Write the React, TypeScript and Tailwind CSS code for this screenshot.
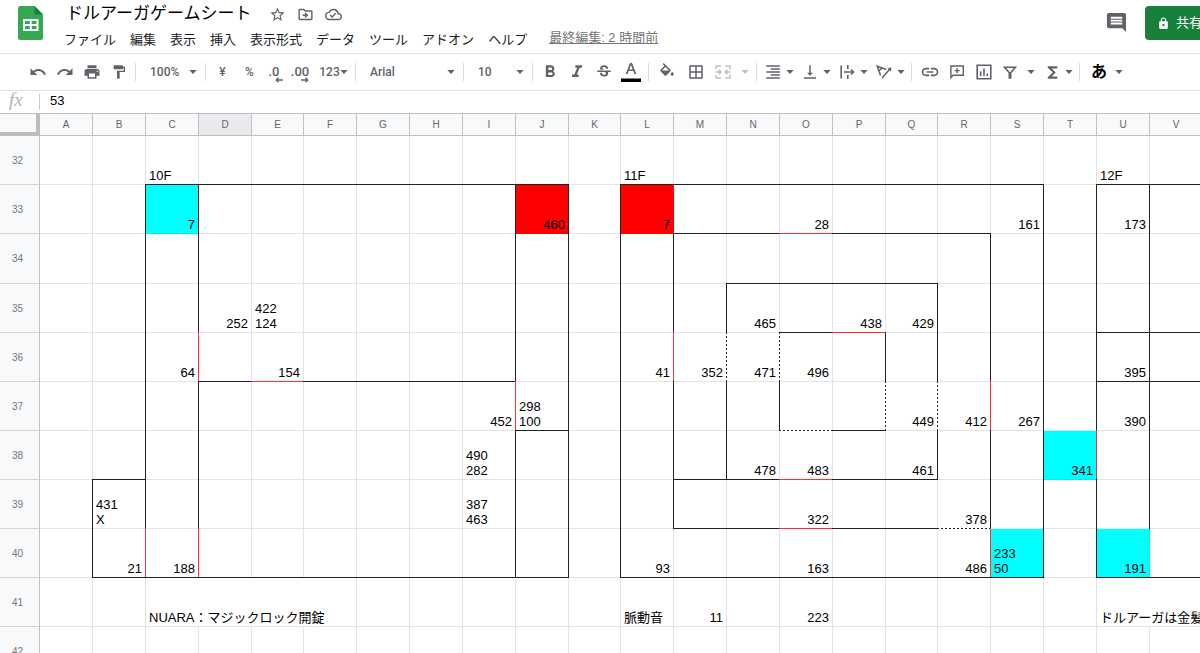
import React, { useState } from 'react';
import {
  MdBorderAll,
  MdComment,
  MdFormatAlignRight,
  MdFormatBold,
  MdFormatItalic,
  MdFormatPaint,
  MdLock,
  MdOutlineCloudDone,
  MdOutlineDriveFileMove,
  MdPrint,
  MdRedo,
  MdStarBorder,
  MdStrikethroughS,
  MdUndo,
  MdVerticalAlignBottom,
  MdInsertLink,
  MdFunctions,
} from 'react-icons/md';

type Line = 'black' | 'red' | 'dotted';
type Wall = [cols: string, rows: string, line: Line];

interface CellData {
  text: string;
  left?: boolean;
  span?: number;
}

const COLUMNS = 'ABCDEFGHIJKLMNOPQRSTUV'.split('');
const ROWS = [32, 33, 34, 35, 36, 37, 38, 39, 40, 41, 42];
const NARROW = 'EKQ';
const MENUS = ['ファイル', '編集', '表示', '挿入', '表示形式', 'データ', 'ツール', 'アドオン', 'ヘルプ'];

// later entries win over earlier ones
const RIGHT_WALLS: Wall[] = [
  ['A', '39-40', 'black'],
  ['B', '33-39', 'black'],
  ['B', '40-40', 'red'],
  ['C', '33-39', 'black'],
  ['C', '36-36', 'red'],
  ['C', '40-40', 'red'],
  ['I', '33-40', 'black'],
  ['I', '37-37', 'red'],
  ['JK', '33-40', 'black'],
  ['L', '34-39', 'black'],
  ['L', '36-36', 'red'],
  ['M', '35-38', 'black'],
  ['MN', '36-36', 'dotted'],
  ['N', '37-37', 'black'],
  ['P', '36-36', 'black'],
  ['Q', '35-38', 'black'],
  ['PQ', '37-37', 'dotted'],
  ['R', '34-39', 'black'],
  ['R', '37-37', 'red'],
  ['R', '40-40', 'red'],
  ['ST', '33-40', 'black'],
  ['T', '38-38', 'red'],
  ['U', '33-39', 'black'],
];

const BOTTOM_WALLS: Wall[] = [
  ['CDEFGHIJLMNOPQRSUV', '32-32', 'black'],
  ['MNOPQR', '33-33', 'black'],
  ['O', '33-33', 'red'],
  ['NOPQ', '34-34', 'black'],
  ['OUV', '35-35', 'black'],
  ['P', '35-35', 'red'],
  ['DFGHIUV', '36-36', 'black'],
  ['E', '36-36', 'red'],
  ['JP', '37-37', 'black'],
  ['O', '37-37', 'dotted'],
  ['BMNPQ', '38-38', 'black'],
  ['MNPQ', '39-39', 'black'],
  ['O', '38-39', 'red'],
  ['R', '39-39', 'dotted'],
  ['BCDEFGHIJLMNOPQRSUV', '40-40', 'black'],
];

const FILLS: Record<string, 'cyan' | 'red'> = {
  C33: 'cyan',
  J33: 'red',
  L33: 'red',
  T38: 'cyan',
  S40: 'cyan',
  U40: 'cyan',
};

const CELLS: Record<string, CellData> = {
  C32: { text: '10F', left: true },
  L32: { text: '11F', left: true },
  U32: { text: '12F', left: true },
  C33: { text: '7' },
  J33: { text: '460' },
  L33: { text: '7' },
  O33: { text: '28' },
  S33: { text: '161' },
  U33: { text: '173' },
  D35: { text: '252' },
  E35: { text: '422\n124', left: true },
  N35: { text: '465' },
  P35: { text: '438' },
  Q35: { text: '429' },
  C36: { text: '64' },
  E36: { text: '154' },
  L36: { text: '41' },
  M36: { text: '352' },
  N36: { text: '471' },
  O36: { text: '496' },
  U36: { text: '395' },
  I37: { text: '452' },
  J37: { text: '298\n100', left: true },
  Q37: { text: '449' },
  R37: { text: '412' },
  S37: { text: '267' },
  U37: { text: '390' },
  I38: { text: '490\n282', left: true },
  N38: { text: '478' },
  O38: { text: '483' },
  Q38: { text: '461' },
  T38: { text: '341' },
  B39: { text: '431\nX', left: true },
  I39: { text: '387\n463', left: true },
  O39: { text: '322' },
  R39: { text: '378' },
  B40: { text: '21' },
  C40: { text: '188' },
  L40: { text: '93' },
  O40: { text: '163' },
  R40: { text: '486' },
  S40: { text: '233\n50', left: true },
  U40: { text: '191' },
  C41: { text: 'NUARA：マジックロック開錠', left: true, span: 4 },
  L41: { text: '脈動音', left: true },
  M41: { text: '11' },
  O41: { text: '223' },
  U41: { text: 'ドルアーガは金髪', left: true, span: 2 },
};

const FILL_CLASS = {
  cyan: 'bg-[#00ffff] border-[#00f0f0]',
  red: 'bg-[#ff0000] border-[#ff0000]',
  none: 'border-[#e2e3e3]',
};

const RIGHT_LINE = {
  black: 'bg-[#222]',
  red: 'bg-[#ff3030]',
  dotted: 'bg-[repeating-linear-gradient(to_bottom,#222_0_2px,#fff_2px_4px)]',
};

const BOTTOM_LINE = {
  black: 'bg-[#222]',
  red: 'bg-[#ff3030]',
  dotted: 'bg-[repeating-linear-gradient(to_right,#222_0_2px,#fff_2px_4px)]',
};

const findWall = (walls: Wall[], col: string, row: number): Line | undefined => {
  let found: Line | undefined;
  walls.forEach(([cols, rows, line]) => {
    const [from, to] = rows.split('-').map(Number);
    if (cols.includes(col) && row >= from && row <= to) found = line;
  });
  return found;
};

const Caret: React.FC = () => (
  <svg viewBox="0 0 8 4" className="w-2 h-1 shrink-0 fill-current" aria-hidden="true">
    <path d="M0.3 0h7.4L4 4z" />
  </svg>
);

const Divider: React.FC = () => <div className="w-px h-[18px] mx-[3px] shrink-0 bg-[#dadce0]" />;

interface ToolProps {
  label: string;
  width?: string;
  className?: string;
  children: React.ReactNode;
}

const Tool: React.FC<ToolProps> = ({ label, width = 'w-[27px]', className = '', children }) => (
  <button
    type="button"
    aria-label={label}
    title={label}
    className={`${width} h-7 shrink-0 flex items-center justify-center rounded hover:bg-gray-100 ${className}`}
  >
    {children}
  </button>
);

const MenuTool: React.FC<{ label: string; children: React.ReactNode }> = ({ label, children }) => (
  <button
    type="button"
    aria-label={label}
    title={label}
    className="w-[37px] h-7 pr-[3px] shrink-0 flex items-center rounded hover:bg-gray-100"
  >
    <span className="flex-1 flex justify-center">{children}</span>
    <Caret />
  </button>
);

interface PickerProps {
  label: string;
  width: string;
  options: string[];
}

const Picker: React.FC<PickerProps> = ({ label, width, options }) => {
  const [value, setValue] = useState(options[0]);

  return (
    <div className={`${width} relative shrink-0 flex items-center`}>
      <select
        aria-label={label}
        value={value}
        onChange={(e) => setValue(e.target.value)}
        className="w-full h-7 pl-[11px] appearance-none bg-transparent text-xs font-medium focus:outline-none"
      >
        {options.map((option) => (
          <option key={option}>{option}</option>
        ))}
      </select>
      <span className="absolute right-[5px] pointer-events-none">
        <Caret />
      </span>
    </div>
  );
};

const SheetsLogo: React.FC = () => (
  <svg viewBox="0 0 25 34" className="w-[25px] h-[34px] shrink-0" role="img" aria-label="スプレッドシート">
    <path d="M2.3 0H16.500l8.500 8.500V31.700A2.300 2.300 0 0 1 22.700 34H2.300A2.300 2.300 0 0 1 0 31.700V2.300A2.300 2.300 0 0 1 2.300 0z" fill="#34a853" />
    <path d="M16.500 0 25 8.500h-8.500z" fill="#188038" />
    <path d="M5 13h15.500v12H5zm2 2v3h4.800v-3zm6.700 0v3h4.800v-3zM7 20v3h4.800v-3zm6.700 0v3h4.800v-3z" fill="#fff" fillRule="evenodd" />
  </svg>
);

const Header: React.FC = () => (
  <header className="h-[54px] pl-[18px] flex border-b border-[#e0e2e6]">
    <div className="pt-1.5">
      <SheetsLogo />
    </div>
    <div className="ml-[21px] flex flex-col">
      <div className="h-7 flex items-center text-[#5f6368]">
        <h1 className="pl-0.5 text-[17px] leading-7 text-black whitespace-nowrap">ドルアーガゲームシート</h1>
        <div className="ml-[18px] flex items-center gap-[11px]">
          <button type="button" aria-label="スター"><MdStarBorder size={17} /></button>
          <button type="button" aria-label="移動"><MdOutlineDriveFileMove size={17} /></button>
          <button type="button" aria-label="ドキュメントのステータス"><MdOutlineCloudDone size={17} /></button>
        </div>
      </div>
      <nav className="h-6 flex items-center gap-3.5 text-[13px] text-[#202124] whitespace-nowrap">
        {MENUS.map((menu) => (
          <button key={menu} type="button">{menu}</button>
        ))}
        <a href="#history" className="ml-2 pb-1 text-[#777] underline">最終編集: 2 時間前</a>
      </nav>
    </div>
    <div className="ml-auto pt-1.5 flex items-start shrink-0">
      <button type="button" aria-label="コメント履歴" className="h-8 mr-[17px] flex items-center text-[#5f6368]">
        <MdComment size={23} />
      </button>
      <button
        type="button"
        className="w-[100px] h-[34px] -mr-[45px] pl-3 flex items-center gap-1.5 rounded bg-[#188038] text-[13px] text-white"
      >
        <MdLock size={13} />
        共有
      </button>
    </div>
  </header>
);

const Toolbar: React.FC = () => (
  <div
    role="toolbar"
    className="h-[37px] pl-6 flex items-center border-b border-[#e0e2e6] text-[#5f6368] text-xs font-medium font-[Roboto,'Noto_Sans_CJK_JP',sans-serif]"
  >
    <Tool label="元に戻す"><MdUndo size={18} /></Tool>
    <Tool label="やり直し"><MdRedo size={18} /></Tool>
    <Tool label="印刷"><MdPrint size={18} /></Tool>
    <Tool label="書式を貼り付け"><MdFormatPaint size={16} /></Tool>
    <Divider />
    <Picker label="ズーム" width="w-[63px]" options={['100%', '50%', '75%', '125%']} />
    <Divider />
    <Tool label="通貨">¥</Tool>
    <Tool label="パーセント">%</Tool>
    <Tool label="小数点以下の桁数を減らす" width="w-[22px]">
      <span className="relative text-[13px]">
        .0
        <svg viewBox="0 0 8 6" className="absolute left-[7px] top-[14px] w-2 h-1.5" fill="none" stroke="currentColor">
          <path d="M8 3H1M3.500 0.800 1.200 3l2.300 2.200" strokeWidth="1.300" />
        </svg>
      </span>
    </Tool>
    <Tool label="小数点以下の桁数を増やす" width="w-[30px]">
      <span className="relative text-[13px]">
        .00
        <svg viewBox="0 0 8 6" className="absolute left-[10px] top-[14px] w-2 h-1.5" fill="none" stroke="currentColor">
          <path d="M0 3h7M4.500 0.800 6.800 3 4.500 5.200" strokeWidth="1.300" />
        </svg>
      </span>
    </Tool>
    <Tool label="表示形式の詳細" width="w-[37px]"><span>123</span><Caret /></Tool>
    <Divider />
    <Picker label="フォント" width="w-[101px]" options={['Arial', 'Roboto', 'Verdana']} />
    <Divider />
    <Picker label="フォントサイズ" width="w-[62px]" options={['10', '11', '12', '14']} />
    <Divider />
    <Tool label="太字"><MdFormatBold size={20} /></Tool>
    <Tool label="斜体"><MdFormatItalic size={20} /></Tool>
    <Tool label="取り消し線"><MdStrikethroughS size={18} /></Tool>
    <Tool label="テキストの色" width="w-[28px]">
      <svg viewBox="0 0 20 20" className="w-5 h-5">
        <path d="M9 1h2l4.300 11h-1.900l-1.100-3H7.700l-1.100 3H4.700zM8.300 7.400h3.400L10 2.900z" fill="currentColor" />
        <path d="M0 16.500h20V20H0z" fill="#000" />
      </svg>
    </Tool>
    <Divider />
    <Tool label="塗りつぶしの色" width="w-[30px]">
      <svg viewBox="0 0 24 24" className="w-[18px] h-[18px] fill-current">
        <path d="M16.560 8.940 7.620 0 6.210 1.410l2.380 2.380-5.150 5.150c-.59.59-.59 1.540 0 2.120l5.500 5.500c.29.29.68.44 1.060.44s.77-.15 1.060-.44l5.500-5.500c.59-.58.59-1.530 0-2.120zM5.210 10 10 5.210 14.790 10H5.210zM19 11.500s-2 2.170-2 3.500c0 1.100.9 2 2 2s2-.9 2-2c0-1.330-2-3.500-2-3.500z" />
      </svg>
    </Tool>
    <Tool label="枠線"><MdBorderAll size={18} /></Tool>
    <Tool label="セルを結合" width="w-[28px]" className="text-[#c0c2c5]">
      <svg viewBox="0 0 16 14" className="w-4 h-3.5" fill="none" stroke="currentColor" strokeWidth="1.600">
        <path d="M1 4V1h5M10 1h5v3M1 10v3h5M10 13h5v-3M0.500 7h5M3.700 4.900 5.800 7 3.700 9.100M15.500 7h-5M12.300 4.900 10.200 7l2.100 2.100" />
      </svg>
    </Tool>
    <Tool label="結合の種類" width="w-4" className="text-[#c0c2c5]"><Caret /></Tool>
    <Divider />
    <MenuTool label="水平方向の配置"><MdFormatAlignRight size={18} /></MenuTool>
    <MenuTool label="垂直方向の配置"><MdVerticalAlignBottom size={18} /></MenuTool>
    <MenuTool label="テキストを折り返す">
      <svg viewBox="0 0 15 14" className="w-[15px] h-3.5" fill="none" stroke="currentColor" strokeWidth="1.600">
        <path d="M1.200 0.500v13M7.800 0v4M7.800 10v4M4 7h9.500M11 4.500 13.500 7 11 9.500" />
      </svg>
    </MenuTool>
    <MenuTool label="テキストの回転">
      <svg viewBox="0 0 16 14" className="w-4 h-3.5" fill="none" stroke="currentColor" strokeWidth="1.500">
        <path d="M4.600 10.500 1.200 1.300l9 3.200M3 5.800l3.700-3.100M6 13l7.500-8.500" />
        <path d="M15.500 2.200l-.6 4.300-3.500-3z" fill="currentColor" stroke="none" />
      </svg>
    </MenuTool>
    <Divider />
    <Tool label="リンクを挿入" width="w-[29px]"><MdInsertLink size={20} /></Tool>
    <Tool label="コメントを挿入" width="w-[26px]">
      <svg viewBox="0 0 14 14" className="w-3.5 h-3.5" fill="none" stroke="currentColor" strokeWidth="1.400">
        <path d="M0.900 12.600V1h12.400v9.300H3.200zM7.100 3v5.200M4.500 5.600h5.200" />
      </svg>
    </Tool>
    <Tool label="グラフを挿入">
      <svg viewBox="0 0 16 16" className="w-4 h-4" fill="none" stroke="currentColor" strokeWidth="1.600">
        <path d="M1.200 1.200h13.600v13.600H1.200zM4.700 7.500V12M8 4.500V12M11.300 9.500V12" />
      </svg>
    </Tool>
    <Tool label="フィルタを作成" width="w-[26px]">
      <svg viewBox="0 0 14 13" className="w-3.5 h-[13px]" fill="none" stroke="currentColor" strokeWidth="1.600">
        <path d="M1.600 1.300h10.800L7.700 6.700V12H6.300V6.700z" />
      </svg>
    </Tool>
    <Tool label="フィルタ表示" width="w-4"><Caret /></Tool>
    <MenuTool label="関数"><MdFunctions size={19} /></MenuTool>
    <Divider />
    <Tool label="入力ツール" width="w-8" className="text-base font-bold text-black">あ</Tool>
    <Tool label="入力方法の選択" width="w-2"><Caret /></Tool>
  </div>
);

const FormulaBar: React.FC = () => {
  const [value, setValue] = useState('53');

  return (
    <div className="h-[22px] flex items-center">
      <label
        htmlFor="formula"
        className="w-[39px] pl-[9px] pb-1 text-[19px] leading-[18px] italic text-[#b4b4b4] font-['Liberation_Serif',serif]"
      >
        fx
      </label>
      <div className="w-px h-4 bg-[#ccc]" />
      <input
        id="formula"
        value={value}
        onChange={(e) => setValue(e.target.value)}
        className="flex-1 pl-2.5 pb-0.5 text-[13px] leading-5 text-black focus:outline-none"
      />
    </div>
  );
};

const Cell: React.FC<{ col: string; row: number }> = ({ col, row }) => {
  const id = `${col}${row}`;
  const cell = CELLS[id];
  const fill = FILL_CLASS[FILLS[id] ?? 'none'];
  const right = findWall(RIGHT_WALLS, col, row);
  const bottom = findWall(BOTTOM_WALLS, col, row);
  const align = cell?.left ? 'text-left' : 'text-right';

  return (
    <td
      colSpan={cell?.span}
      className={`relative border-r border-b px-[3px] pb-px align-bottom whitespace-pre leading-[15px] ${fill} ${align}`}
    >
      {cell?.text}
      {/* walls lie over the grid lines and reach into the corners */}
      {bottom && <span className={`absolute -left-px -right-px -bottom-px h-px ${BOTTOM_LINE[bottom]}`} />}
      {right && <span className={`absolute -right-px -top-px -bottom-px w-px ${RIGHT_LINE[right]}`} />}
    </td>
  );
};

// columns swallowed by a spanning cell to their left
const isCovered = (col: string, row: number) =>
  COLUMNS.some((other, i) => {
    const span = CELLS[`${other}${row}`]?.span ?? 1;
    const index = COLUMNS.indexOf(col);
    return index > i && index < i + span;
  });

const Grid: React.FC = () => (
  <table className="w-[1202px] table-fixed border-separate border-spacing-0 text-[13px] text-black">
    <colgroup>
      <col className="w-10" />
      {COLUMNS.map((col) => (
        <col key={col} className={NARROW.includes(col) ? 'w-[52px]' : 'w-[53px]'} />
      ))}
    </colgroup>
    <thead>
      <tr className="h-[23px] text-[10px] leading-4 text-[#666]">
        <td className="border-t border-t-[#c0c0c0] border-r-4 border-b-4 border-r-[#bcbcbc] border-b-[#bcbcbc] bg-[#f8f9fa] p-0" />
        {COLUMNS.map((col) => (
          <th
            key={col}
            scope="col"
            className={`border-t border-r border-b border-[#c0c0c0] p-0 font-normal ${col === 'D' ? 'bg-[#e8eaed]' : 'bg-[#f8f9fa]'}`}
          >
            {col}
          </th>
        ))}
      </tr>
    </thead>
    <tbody>
      {ROWS.map((row) => (
        <tr key={row} className={row === 34 ? 'h-[50px]' : 'h-[49px]'}>
          <th
            scope="row"
            className="border-r border-b border-r-[#c0c0c0] border-b-[#d5d5d5] bg-[#f8f9fa] p-0 pr-1 text-[10px] font-normal text-[#777]"
          >
            {row}
          </th>
          {COLUMNS.filter((col) => !isCovered(col, row)).map((col) => (
            <Cell key={col} col={col} row={row} />
          ))}
        </tr>
      ))}
    </tbody>
  </table>
);

const App: React.FC = () => (
  <div className="h-screen overflow-hidden bg-white font-['Liberation_Sans','Noto_Sans_CJK_JP',sans-serif]">
    <Header />
    <Toolbar />
    <FormulaBar />
    <Grid />
  </div>
);

export default App;
